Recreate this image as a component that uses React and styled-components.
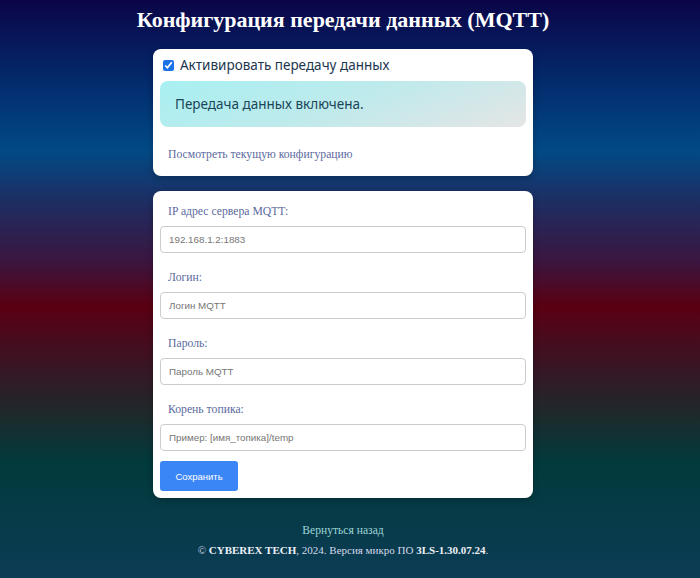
import React from "react";
import styled, { createGlobalStyle } from "styled-components";

const Global = createGlobalStyle`
  html, body { margin: 0; padding: 0; min-height: 100%; }
  body {
    min-height: 578px;
    background: linear-gradient(180deg, #0a0548 0%, #032d6e 15%, #014a85 26%, #1e2d62 35%, #3a1640 45%, #5a0012 53%, #3a1424 63%, #1d2a2c 72%, #013a3c 80%, #0c3c55 100%);
    font-family: "Liberation Serif", serif;
  }
`;

const Page = styled.div`
  display: flex;
  flex-direction: column;
  align-items: center;
  padding: 0 14px 14px 0;
`;

const Title = styled.h1`
  margin: 7px 0 17px;
  font-family: "Liberation Serif", serif;
  font-size: 22px;
  line-height: 25px;
  font-weight: bold;
  color: #ffffff;
  text-align: center;
`;

const Card = styled.div`
  width: 380px;
  box-sizing: border-box;
  background: #ffffff;
  border-radius: 8px;
  padding: 7px;
  margin-bottom: ${(p) => p.$mb || 0}px;
  box-shadow: 0 2px 6px rgba(0, 0, 0, 0.25);
  display: flex;
  flex-direction: column;
`;

const CheckRow = styled.label`
  display: flex;
  align-items: center;
  gap: 6px;
  padding: 0 3px;
  font-family: "Noto Sans", sans-serif;
  font-size: 13.5px;
  color: #1c3650;
  line-height: 18px;
`;

const Check = styled.input`
  width: 11px;
  height: 11px;
  margin: 0;
  accent-color: #1a73e8;
`;

const Alert = styled.div`
  margin-top: 7px;
  height: 46px;
  display: flex;
  align-items: center;
  padding: 0 15px;
  border-radius: 8px;
  background: linear-gradient(160deg, #a8f0f2 0%, #bfeaec 50%, #e5e5e5 100%);
  font-family: "Noto Sans", sans-serif;
  font-size: 13.5px;
  color: #1a4658;
`;

const ConfigLink = styled.a`
  display: block;
  margin: 21px 8px 7px;
  font-size: 11.7px;
  line-height: 14px;
  color: #5c6aa0;
  text-decoration: none;
`;

const FieldLabel = styled.label`
  display: block;
  margin-top: ${(p) => (p.$first ? 0 : 11)}px;
  padding: 6px 8px;
  font-size: 11.7px;
  line-height: 16px;
  color: #5a6a9e;
`;

const Input = styled.input`
  display: block;
  box-sizing: border-box;
  width: 100%;
  height: 27px;
  margin: 0;
  padding: 0 8px;
  border: 1px solid #cccccc;
  border-radius: 4px;
  font-family: "Liberation Sans", sans-serif;
  font-size: 9.8px;
  color: #333;
  &::placeholder { color: #767676; }
`;

const SaveButton = styled.button`
  align-self: flex-start;
  margin-top: 10px;
  height: 30px;
  width: 78px;
  padding: 0;
  border: none;
  border-radius: 3px;
  background: #3b86f7;
  color: #ffffff;
  font-family: "Liberation Sans", sans-serif;
  font-size: 9.5px;
`;

const Footer = styled.div`
  margin-top: 26px;
  display: flex;
  flex-direction: column;
  align-items: center;
  gap: 5px;
  line-height: 14px;
`;

const BackLink = styled.a`
  font-size: 11.6px;
  color: #9ed5d8;
  text-decoration: none;
`;

const Copy = styled.div`
  font-size: 11px;
  color: #d2d8ea;
  b { color: #eef0f8; }
`;

const fields = [
  { label: "IP адрес сервера MQTT:", placeholder: "192.168.1.2:1883" },
  { label: "Логин:", placeholder: "Логин MQTT" },
  { label: "Пароль:", placeholder: "Пароль MQTT" },
  { label: "Корень топика:", placeholder: "Пример: [имя_топика]/temp" },
];

export default function App() {
  return (
    <>
      <Global />
      <Page>
        <Title>Конфигурация передачи данных (MQTT)</Title>
        <Card $mb={15}>
          <CheckRow>
            <Check type="checkbox" defaultChecked />
            Активировать передачу данных
          </CheckRow>
          <Alert>Передача данных включена.</Alert>
          <ConfigLink href="#">Посмотреть текущую конфигурацию</ConfigLink>
        </Card>
        <Card>
          {fields.map((f, i) => (
            <React.Fragment key={f.label}>
              <FieldLabel $first={i === 0}>{f.label}</FieldLabel>
              <Input placeholder={f.placeholder} />
            </React.Fragment>
          ))}
          <SaveButton>Сохранить</SaveButton>
        </Card>
        <Footer>
          <BackLink href="#">Вернуться назад</BackLink>
          <Copy>
            © <b>CYBEREX TECH</b>, 2024. Версия микро ПО <b>3LS-1.30.07.24</b>.
          </Copy>
        </Footer>
      </Page>
    </>
  );
}
